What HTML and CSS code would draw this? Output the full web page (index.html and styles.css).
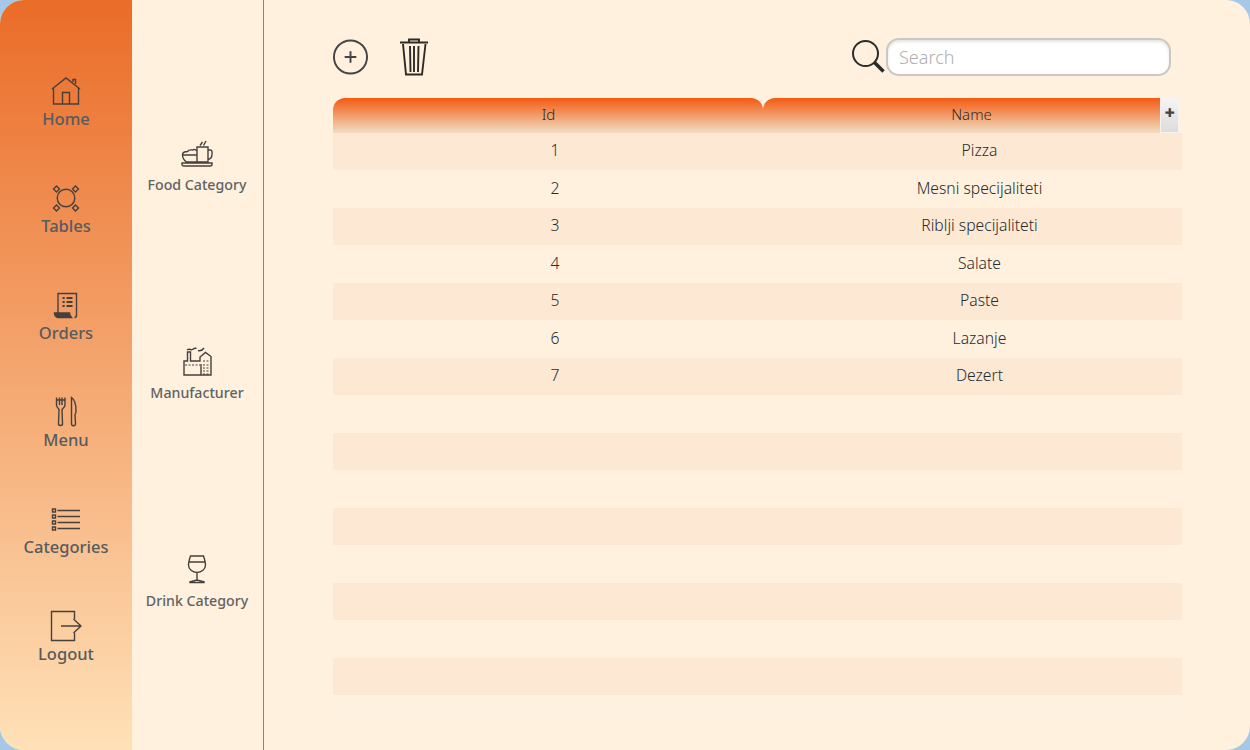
FILE: index.html
```html
<!DOCTYPE html>
<html lang="en">
<head>
<meta charset="utf-8">
<title>Categories</title>
<link rel="stylesheet" href="styles.css">
</head>
<body>
<div class="window">
  <nav class="rail">
    <a class="rail-item">
      <svg class="icon" viewBox="0 0 32 32"><path d="M2 14 16 3l14 11M3.500 13v16h25V13M12.500 29V17.500h7V29M23 7V4.500h2.500V9"/></svg>
      <span>Home</span>
    </a>
    <a class="rail-item">
      <svg class="icon" viewBox="0 0 32 32"><circle cx="16" cy="16" r="8.800"/><path d="M6.500 4 9.500 7 6.500 10 3.500 7ZM25.500 4 28.500 7 25.500 10 22.500 7ZM6.500 23 9.500 26 6.500 29 3.500 26ZM25.500 23 28.500 26 25.500 29 22.500 26Z"/></svg>
      <span>Tables</span>
    </a>
    <a class="rail-item">
      <svg class="icon" viewBox="0 0 32 32"><path d="M8 24V4.500h18.500V26c0 1.500-1 2.500-2 2.500"/><path class="solid" d="M4.500 24h15c0 2 .8 3 2 4.500H8c-2 0-3.500-2-3.500-4.500Z"/><path class="thick" d="M12.500 9h2.200M16.500 9h6M12.500 13h2.200M16.500 13h6M12.500 17h2.200M16.500 17h6"/></svg>
      <span>Orders</span>
    </a>
    <a class="rail-item">
      <svg class="icon" viewBox="0 0 32 32"><path d="M6.500 1.500V9c0 2 1.500 3.500 2.500 4.500l-.5 14.500c0 2 4 2 4 0L12 13.500c1-1 3-2.500 3-4.500V1.500M9.500 1.500V9M12 1.500V9M6.500 4H15"/><path d="M21.500 1.500c3 2 4.500 7 4.500 13 0 3-.5 3.500-1 4l.5 9c0 3-4 3-4 0Z"/></svg>
      <span>Menu</span>
    </a>
    <a class="rail-item">
      <svg class="icon" viewBox="0 0 32 32"><path d="M7.500 7.500H30M7.500 13.500H30M7.500 19.500H30M7.500 25.500H30"/><path d="M2.500 6h3v3h-3ZM2.500 12h3v3h-3ZM2.500 18h3v3h-3ZM2.500 24h3v3h-3Z"/></svg>
      <span>Categories</span>
    </a>
    <a class="rail-item">
      <svg class="icon" viewBox="0 0 32 32"><path d="M24.500 9V1.500h-23v29h23V23M11 16h20M23.500 9 31 16l-7.500 7"/></svg>
      <span>Logout</span>
    </a>
  </nav>

  <nav class="subnav">
    <a class="sub-item">
      <svg class="icon" viewBox="0 0 32 32"><path d="M16 10h11v15H16ZM27 13h2.500c2 0 1.500 3 1.500 4.500 0 3-2 4.500-4 5M16 14c-1-1-3-2-4.500-1-3-.5-4 0-5 1.500-3 0-5 1.500-5 3.500 0 3 2 5.500 4 7H16M1.500 18H16M1 26h30v1.500c0 1-1 1.500-2 1.500H3c-1 0-2-.5-2-1.500ZM19 8.500l2.500-3.500M22.500 8.500 25 4"/></svg>
      <span>Food Category</span>
    </a>
    <a class="sub-item">
      <svg class="icon" viewBox="0 0 32 32"><path d="M3 30V16h3.500V7H9.500v9H19v-4l5.500-4.500 5.500 4V30ZM20 19v11"/><path class="dash" d="M4 20h15M22 16h7M22 20h7M22 23h7M22 26h7M22 29h7"/><path d="M6 5c2.500-2 4 .5 5.500-.5s3-1.500 4-1M17 5.500c2 .5 4 .5 6-2.500"/></svg>
      <span>Manufacturer</span>
    </a>
    <a class="sub-item">
      <svg class="icon" viewBox="0 0 32 32"><path d="M9.500 3h13c1 3 2 6 2 9 0 4-4 7.500-8.500 7.500S7.500 16 7.500 12c0-3 1-6 2-9ZM8 9h16M16 19.500V27M16 27l-7 1.800V29.500h14v-.7Z"/></svg>
      <span>Drink Category</span>
    </a>
  </nav>

  <main class="content">
    <div class="toolbar">
      <button class="tool tool-add" aria-label="Add">
        <svg viewBox="0 0 38 38"><circle cx="19" cy="19" r="17"/><path d="M13 19h12M19 13v12"/></svg>
      </button>
      <button class="tool tool-delete" aria-label="Delete">
        <svg viewBox="0 0 30 38"><path d="M1 4.500h28M10 4.500V1.500h10v3"/><path d="M4 6l3 30.500h16L26.500 6M11 8l.5 26M15 8v26M19.500 8 19 34"/></svg>
      </button>
      <div class="search">
        <svg class="search-icon" viewBox="0 0 34 34"><circle cx="14.500" cy="14.500" r="12.500"/><path class="handle" d="M23.500 23.500l9 9"/></svg>
        <input class="search-input" type="text" placeholder="Search">
      </div>
    </div>

    <div class="grid">
      <div class="grid-head">
        <div class="head-cell">Id</div>
        <div class="head-cell">Name</div>
        <div class="head-add">✚</div>
      </div>
      <div class="row"><div>1</div><div>Pizza</div></div>
      <div class="row"><div>2</div><div>Mesni specijaliteti</div></div>
      <div class="row"><div>3</div><div>Riblji specijaliteti</div></div>
      <div class="row"><div>4</div><div>Salate</div></div>
      <div class="row"><div>5</div><div>Paste</div></div>
      <div class="row"><div>6</div><div>Lazanje</div></div>
      <div class="row"><div>7</div><div>Dezert</div></div>
      <div class="row"></div>
      <div class="row"></div>
      <div class="row"></div>
      <div class="row"></div>
      <div class="row"></div>
      <div class="row"></div>
      <div class="row"></div>
      <div class="row"></div>
      <div class="row"></div>
    </div>
  </main>
</div>
</body>
</html>
```

FILE: styles.css
```css
* { box-sizing: border-box; }

html, body {
  margin: 0;
  height: 100%;
  background: #a5c8e6;
  overflow: hidden;
}

.window {
  width: 1250px;
  height: 750px;
  display: flex;
  border-radius: 24px;
  overflow: hidden;
  background: #fff1de;
  font-family: "Noto Sans", "Open Sans", sans-serif;
}

.icon {
  width: 32px;
  height: 32px;
  flex: none;
  fill: none;
  stroke: #46403c;
  stroke-width: 1.400;
}
.icon .solid { fill: #46403c; stroke: #46403c; }
.icon .thick { stroke-width: 2; }
.icon .dash { stroke-dasharray: 2 1.500; stroke-width: 1.200; }

.rail {
  width: 132px;
  flex: none;
  padding-top: 75px;
  display: flex;
  flex-direction: column;
  background: linear-gradient(180deg, #ea6c28 0%, #ffe1b8 100%);
}
.rail-item {
  height: 107px;
  flex: none;
  display: flex;
  flex-direction: column;
  align-items: center;
  gap: 2px;
  font-size: 16.500px;
  font-weight: 500;
  line-height: 20px;
  color: #565b5f;
}

.subnav {
  width: 132px;
  flex: none;
  padding-top: 137px;
  padding-right: 1px;
  display: flex;
  flex-direction: column;
  border-right: 1px solid #8d8479;
}
.sub-item {
  height: 208px;
  flex: none;
  display: flex;
  flex-direction: column;
  align-items: center;
  gap: 6px;
  font-size: 14.200px;
  font-weight: 500;
  line-height: 20px;
  color: #626262;
}

.content {
  flex: 1;
  padding: 38px 68px 0 69px;
  min-width: 0;
}

.toolbar {
  height: 38px;
  padding-right: 11px;
  margin-bottom: 22px;
  display: flex;
  align-items: center;
}
.tool {
  padding: 0;
  border: 0;
  background: none;
  display: flex;
}
.tool-add { width: 36px; height: 38px; margin-right: 30px; }
.tool-add svg { width: 38px; height: 38px; margin-left: -1px; fill: none; stroke: #454545; stroke-width: 2; }
.tool-delete { width: 30px; height: 38px; }
.tool-delete svg { width: 30px; height: 38px; fill: none; stroke: #2e2a27; stroke-width: 1.900; }

.search {
  margin-left: auto;
  display: flex;
  align-items: center;
  gap: 1px;
}
.search-icon { width: 34px; height: 34px; margin-top: -3px; fill: none; stroke: #2b2b2b; stroke-width: 2; }
.search-icon .handle { stroke-width: 3.500; }
.search-input {
  width: 285px;
  height: 38px;
  padding: 0 11px;
  border: 2px solid #cbc7c3;
  border-radius: 13px;
  background: #fff;
  font-family: inherit;
  font-size: 18px;
  font-weight: 300;
  outline: none;
  box-shadow: inset 0 2px 3px #e4e4e4;
}
.search-input::placeholder { color: #b0b0b0; opacity: 1; }

.grid { width: 849px; }

.grid-head {
  position: relative;
  width: 846px;
  height: 35px;
  display: grid;
  grid-template-columns: 430px 1fr;
}
.head-cell {
  display: flex;
  align-items: center;
  justify-content: center;
  padding: 0 0 3px 1px;
  border-radius: 12px 12px 0 0;
  background: linear-gradient(180deg, #f45a12 0%, #efdec2 100%);
  font-size: 15px;
  font-weight: 300;
  color: #2f2b29;
}
.head-add {
  position: absolute;
  top: 0;
  right: 0;
  width: 19px;
  height: 35px;
  display: flex;
  align-items: center;
  justify-content: center;
  padding-bottom: 5px;
  background: linear-gradient(180deg, #f4f4f4 0%, #dcdcdc 100%);
  border: 1px solid #f7f4f0;
  font-family: "DejaVu Sans", sans-serif;
  font-size: 12px;
  color: #444;
}

.row {
  height: 38px;
  flex: none;
  display: grid;
  grid-template-columns: 430px 1fr;
  font-size: 15.700px;
  font-weight: 300;
  line-height: 37px;
  color: #2a2c30;
  text-align: center;
}
.row > div { padding-left: 14px; }
.row:nth-child(even) { height: 37px; line-height: 35px; background: #fde8d4; }
.row:last-child { height: 25px; background: #fff1df; }
```
